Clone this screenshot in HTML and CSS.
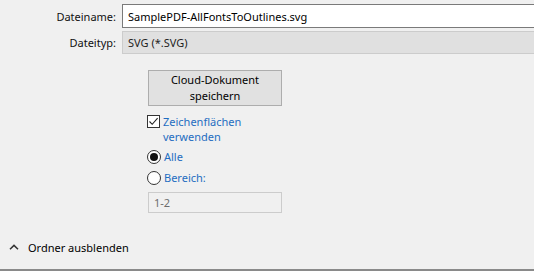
FILE: index.html
```html
<!DOCTYPE html>
<html lang="de">
<head>
  <meta charset="UTF-8">
  <title>Speichern unter</title>
  <link rel="stylesheet" href="styles.css">
</head>
<body>
  <div class="dialog">
    <div class="file-rows">
      <div class="file-row">
        <label class="row-label">Dateiname:</label>
        <div class="field name-field">SamplePDF-AllFontsToOutlines.svg</div>
      </div>
      <div class="file-row">
        <label class="row-label">Dateityp:</label>
        <div class="field type-field">SVG (*.SVG)</div>
      </div>
    </div>

    <div class="options">
      <button class="cloud-button">Cloud-Dokument<br>speichern</button>

      <div class="check-row">
        <span class="checkbox">
          <svg width="11" height="11" viewBox="0 0 11 11">
            <path d="M1.5 5.5 L4.2 8.3 L9.6 2.2" fill="none" stroke="#222" stroke-width="1.1"/>
          </svg>
        </span>
        <span class="option-text">Zeichenflächen<br>verwenden</span>
      </div>

      <div class="radio-row">
        <span class="radio checked"></span>
        <span class="option-text">Alle</span>
      </div>
      <div class="radio-row">
        <span class="radio"></span>
        <span class="option-text">Bereich:</span>
      </div>

      <div class="range-field">1-2</div>
    </div>

    <div class="footer">
      <svg class="chevron" width="10" height="6" viewBox="0 0 10 6">
        <path d="M1 5.2 L5 1.4 L9 5.2" fill="none" stroke="#333" stroke-width="1.5"/>
      </svg>
      <span>Ordner ausblenden</span>
    </div>
  </div>
</body>
</html>
```

FILE: styles.css
```css
body {
  margin: 0;
  background: #f0f0f0;
  font-family: "Noto Sans", "Open Sans", sans-serif;
  font-size: 11px;
  color: #000;
  overflow: hidden;
}
.dialog {
  height: 271px;
  display: flex;
  flex-direction: column;
}
.file-rows {
  padding-top: 4px;
  display: flex;
  flex-direction: column;
  gap: 2px;
}
.file-row {
  display: flex;
  align-items: center;
}
.row-label {
  width: 116px;
  padding-right: 6px;
  text-align: right;
  color: #111;
}
.field {
  flex: 1;
  margin-right: -20px;
  padding-left: 5px;
  box-sizing: border-box;
  display: flex;
  align-items: center;
}
.name-field {
  height: 24px;
  background: #fff;
  border: 1px solid #7a7a7a;
}
.type-field {
  height: 23px;
  background: #e0e0e0;
  border: 1px solid #cccccc;
  color: #222;
  margin-top: 1px;
}
.options {
  margin-left: 147px;
  padding-top: 16px;
  display: flex;
  flex-direction: column;
  align-items: flex-start;
}
.cloud-button {
  width: 134px;
  height: 36px;
  margin-left: 1px;
  background: #e1e1e1;
  border: 1px solid #adadad;
  font-family: inherit;
  font-size: 11px;
  line-height: 16px;
  color: #000;
  padding: 0;
}
.check-row {
  display: flex;
  align-items: flex-start;
  margin-top: 8px;
}
.checkbox {
  width: 13px;
  height: 13px;
  border: 1px solid #333;
  box-sizing: border-box;
  background: #fff;
  margin-top: 1px;
  display: flex;
  align-items: center;
  justify-content: center;
}
.option-text {
  color: #1f6dc1;
  line-height: 15px;
  margin-left: 3px;
}
.radio-row {
  display: flex;
  align-items: center;
  height: 21px;
}
.check-row + .radio-row {
  margin-top: 2px;
}
.radio {
  width: 14px;
  height: 14px;
  border: 1px solid #333;
  border-radius: 50%;
  box-sizing: border-box;
  background: #fff;
  display: flex;
  align-items: center;
  justify-content: center;
}
.radio.checked::after {
  content: "";
  width: 8px;
  height: 8px;
  border-radius: 50%;
  background: #111;
}
.range-field {
  width: 134px;
  height: 21px;
  margin-left: 1px;
  margin-top: 4px;
  box-sizing: border-box;
  border: 1px solid #cccccc;
  padding-left: 5px;
  color: #6d6d6d;
  display: flex;
  align-items: center;
}
.footer {
  margin-top: auto;
  height: 45px;
  display: flex;
  align-items: center;
  padding-left: 9px;
  padding-bottom: 1px;
  border-bottom: 2px solid #8a8a8a;
  box-sizing: border-box;
}
.chevron {
  margin-right: 9px;
}
```
